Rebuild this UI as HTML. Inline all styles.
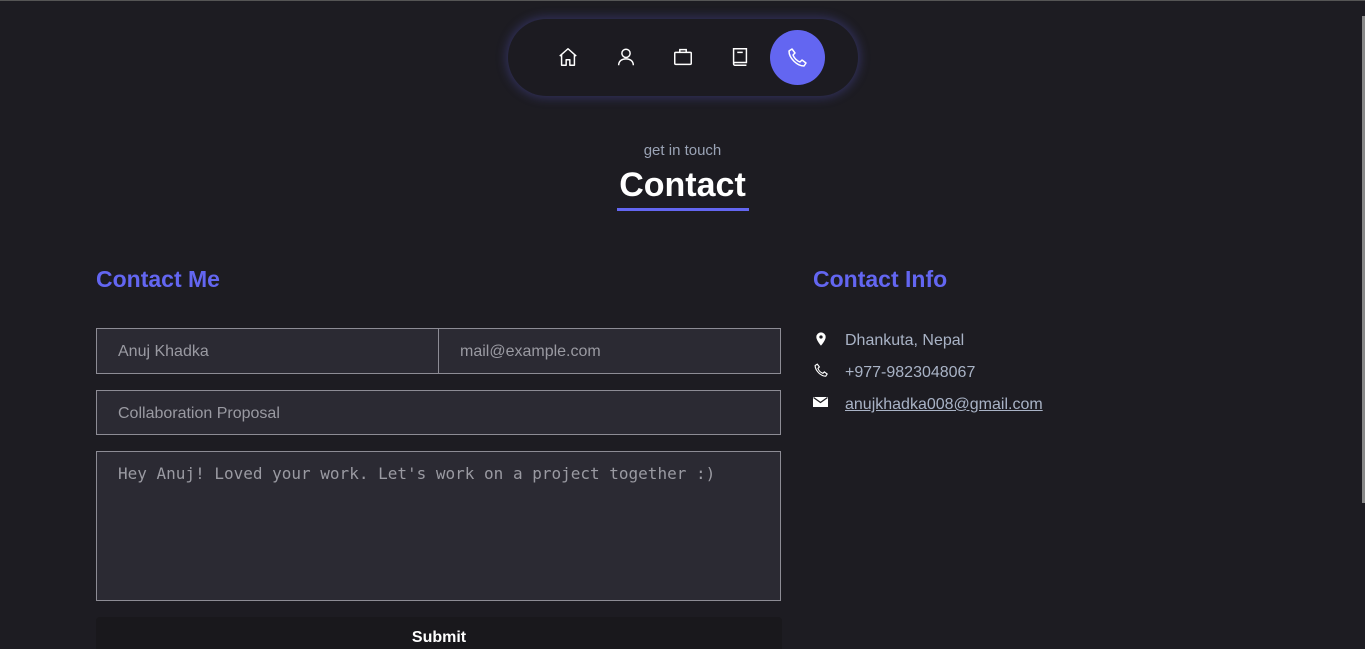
<!DOCTYPE html>
<html><head><meta charset="utf-8"><style>
*{box-sizing:border-box;margin:0;padding:0}
html,body{width:1365px;height:649px;overflow:hidden;background:#1d1c22;font-family:"Liberation Sans",sans-serif;position:relative}
.topline{position:absolute;left:0;top:0;width:1365px;height:1px;background:#555}
.sb{position:absolute;left:1362px;top:16px;width:3px;height:487px;background:#888}
.nav{position:absolute;left:508px;top:19px;width:350px;height:77px;border-radius:40px;background:#1c1b21;box-shadow:0 0 10px 2px rgba(90,90,200,.35)}
.ic{position:absolute;top:18px;width:40px;height:40px;display:flex;align-items:center;justify-content:center}
.act{position:absolute;left:262px;top:11px;width:55px;height:55px;border-radius:50%;background:#6366f1;display:flex;align-items:center;justify-content:center}
.sub{position:absolute;left:0;width:1365px;top:142px;text-align:center;color:#9aa3b5;font-size:15px}
.h{position:absolute;left:0;width:1365px;top:166px;text-align:center;color:#fff;font-size:34px;font-weight:bold}
.ul{position:absolute;left:617px;top:208px;width:132px;height:3px;background:#6366f1}
.h2{position:absolute;color:#6366f1;font-size:23px;font-weight:bold;top:266px}
.in{position:absolute;background:#2b2a33;border:1px solid #8d8c95;color:#9a9aa2;font-size:16px;padding-left:21px;padding-top:2px;display:flex;align-items:center}
.ta{align-items:flex-start;padding-top:12px;font-family:"DejaVu Sans Mono",monospace;font-size:16px}
.btn{position:absolute;left:96px;top:617px;width:686px;height:40px;background:#19181c;border-radius:4px;color:#fff;font-weight:bold;font-size:16px;text-align:center;padding-top:12px}
.info{position:absolute;left:813px;color:#a9b3c6;font-size:16px}
.info svg{position:absolute;left:0}
.info span{position:absolute;left:32px;white-space:nowrap}
</style></head><body>
<div class="topline"></div><div class="sb"></div>
<div class="nav">
<div class="ic" style="left:40px"><svg width="22" height="22" viewBox="0 0 24 24" fill="none" stroke="#fff" stroke-width="1.6" stroke-linejoin="round"><path d="M3 11L12 3l9 8M5 9.5V21h5v-6h4v6h5V9.5"/></svg></div>
<div class="ic" style="left:98px"><svg width="22" height="22" viewBox="0 0 24 24" fill="none" stroke="#fff" stroke-width="1.6"><circle cx="12" cy="8" r="4.5"/><path d="M4 21c0-4.5 3.5-7 8-7s8 2.5 8 7"/></svg></div>
<div class="ic" style="left:155px"><svg width="22" height="22" viewBox="0 0 24 24" fill="none" stroke="#fff" stroke-width="1.6"><rect x="3" y="7" width="18" height="13" rx="1"/><path d="M8.5 7V4h7v3"/></svg></div>
<div class="ic" style="left:212px"><svg width="22" height="22" viewBox="0 0 24 24" fill="none" stroke="#fff" stroke-width="1.6"><path d="M5 3h14v15H6.5A1.5 1.5 0 0 0 5 19.5V3zM5 19.5A1.5 1.5 0 0 0 6.5 21H19M9 7h6"/></svg></div>
<div class="act"><svg width="24" height="24" viewBox="0 0 24 24" fill="none" stroke="#fff" stroke-width="1.5" stroke-linejoin="round"><path d="M6 3l3 4-2 2c1 3 4 6 7 7l2-2 4 3-2 3c-7 0-15-8-15-15z"/></svg></div>
</div>
<div class="sub">get in touch</div>
<div class="h">Contact</div>
<div class="ul"></div>
<div class="h2" style="left:96px">Contact Me</div>
<div class="h2" style="left:813px">Contact Info</div>
<div class="in" style="left:96px;top:328px;width:343px;height:46px">Anuj Khadka</div>
<div class="in" style="left:438px;top:328px;width:343px;height:46px">mail@example.com</div>
<div class="in" style="left:96px;top:390px;width:685px;height:45px">Collaboration Proposal</div>
<div class="in ta" style="left:96px;top:451px;width:685px;height:150px">Hey Anuj! Loved your work. Let's work on a project together :)</div>
<div class="btn">Submit</div>
<div class="info" style="top:332px"><svg width="16" height="16" viewBox="0 0 24 24" style="top:-1px"><path fill="#fff" d="M12 2a7 7 0 0 0-7 7c0 5 7 13 7 13s7-8 7-13a7 7 0 0 0-7-7zm0 9.5A2.5 2.5 0 1 1 12 6.5a2.5 2.5 0 0 1 0 5z"/></svg><span>Dhankuta, Nepal</span></div>
<div class="info" style="top:364px"><svg width="17" height="17" viewBox="0 0 24 24" fill="none" stroke="#fff" stroke-width="1.6" style="top:-2px"><path d="M6 3l3 4-2 2c1 3 4 6 7 7l2-2 4 3-2 3c-7 0-15-8-15-15z"/></svg><span>+977-9823048067</span></div>
<div class="info" style="top:396px"><svg width="15" height="12" viewBox="0 0 15 12" style="top:0"><rect x="0" y="1" width="15" height="10" fill="#fff"/><path d="M0.5 1.5l7 5 7-5" fill="none" stroke="#1d1c22" stroke-width="1.3"/></svg><span style="text-decoration:underline">anujkhadka008@gmail.com</span></div>
</body></html>
